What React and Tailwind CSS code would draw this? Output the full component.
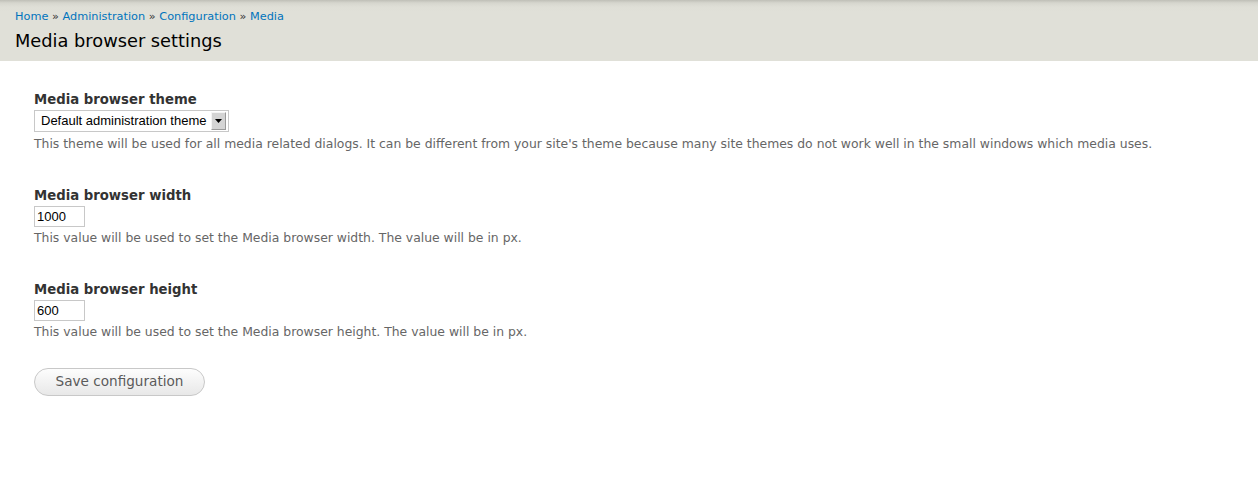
import React from "react";

const dv = { fontFamily: '"DejaVu Sans", sans-serif' };
const lib = { fontFamily: '"Liberation Sans", Arial, sans-serif' };

function Field({ label, children, desc, descMt }) {
  return (
    <div className="mb-[35px]">
      <div className="text-[13.25px] font-bold text-[#333] leading-[18px] mb-[1px]">{label}</div>
      {children}
      <div className={`text-[12.4px] text-[#666] leading-[16px] ${descMt}`}>{desc}</div>
    </div>
  );
}

export default function App() {
  return (
    <div className="min-h-[480px] bg-white" style={dv}>
      <div className="h-[61px] bg-[#e0e0d8] bg-[linear-gradient(to_bottom,#bfbfb7_0px,#d6d6ce_3px,#dfdfd7_7px,#e0e0d8_12px)] px-[15px] pt-[10px]">
        <div className="text-[11.3px] leading-[14px] text-[#333]">
          <a className="text-[#0074bd]">Home</a> » <a className="text-[#0074bd]">Administration</a> »{" "}
          <a className="text-[#0074bd]">Configuration</a> » <a className="text-[#0074bd]">Media</a>
        </div>
        <h1 className="text-[17.8px] leading-[22px] text-black mt-[6px]">Media browser settings</h1>
      </div>
      <div className="px-[34px] pt-[30px]">
        <Field
          label="Media browser theme"
          descMt="mt-[4px]"
          desc="This theme will be used for all media related dialogs. It can be different from your site's theme because many site themes do not work well in the small windows which media uses."
        >
          <div
            className="w-[195px] h-[22px] border border-[#c8c8c8] bg-white flex items-center justify-between pl-[6px] pr-[2px]"
            style={lib}
          >
            <span className="text-[13px] text-black">Default administration theme</span>
            <span className="w-[15px] h-[18px] bg-[#d4d4d4] border border-t-[#f4f4f4] border-l-[#f4f4f4] border-r-[#9a9a9a] border-b-[#9a9a9a] flex items-center justify-center">
              <svg width="7" height="4" viewBox="0 0 7 4"><path d="M0 0h7L3.5 4z" fill="#000" /></svg>
            </span>
          </div>
        </Field>
        <Field label="Media browser width" descMt="mt-[3px]" desc="This value will be used to set the Media browser width. The value will be in px.">
          <div className="w-[51px] h-[21px] border border-[#c8c8c8] bg-white text-[13px] text-black flex items-center pl-[2px]" style={lib}>
            1000
          </div>
        </Field>
        <Field label="Media browser height" descMt="mt-[3px]" desc="This value will be used to set the Media browser height. The value will be in px.">
          <div className="w-[51px] h-[21px] border border-[#c8c8c8] bg-white text-[13px] text-black flex items-center pl-[2px]" style={lib}>
            600
          </div>
        </Field>
        <button
          className="block -mt-[7px] w-[171px] h-[28px] rounded-full border border-[#c8c8c8] bg-[linear-gradient(to_bottom,#fdfdfd,#e8e8e8)] text-[13.6px] text-[#5a5a5a] leading-none"
          style={dv}
        >
          Save configuration
        </button>
      </div>
    </div>
  );
}
